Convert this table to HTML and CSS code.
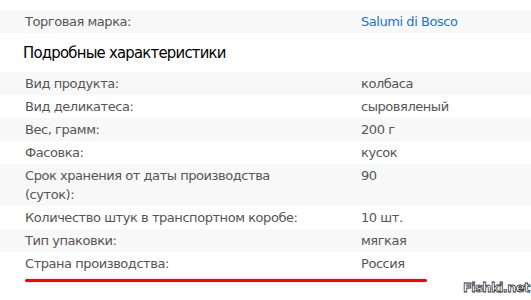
FILE: index.html
```html
<!DOCTYPE html>
<html lang="ru">
<head>
<meta charset="utf-8">
<link rel="stylesheet" href="styles.css">
</head>
<body>
<div class="page">
  <div class="row alt"><div class="label">Торговая марка:</div><div class="value"><a class="link" href="#">Salumi di Bosco</a></div></div>
  <h2 class="heading">Подробные характеристики</h2>
  <div class="row alt"><div class="label">Вид продукта:</div><div class="value">колбаса</div></div>
  <div class="row"><div class="label">Вид деликатеса:</div><div class="value">сыровяленый</div></div>
  <div class="row alt"><div class="label">Вес, грамм:</div><div class="value">200 г</div></div>
  <div class="row"><div class="label">Фасовка:</div><div class="value">кусок</div></div>
  <div class="row alt"><div class="label">Срок хранения от даты производства (суток):</div><div class="value">90</div></div>
  <div class="row"><div class="label">Количество штук в транспортном коробе:</div><div class="value">10 шт.</div></div>
  <div class="row alt"><div class="label">Тип упаковки:</div><div class="value">мягкая</div></div>
  <div class="row last"><div class="label">Страна производства:</div><div class="value">Россия</div></div>
  <div class="underline"></div>
  <div class="watermark">Fishki.net</div>
</div>
</body>
</html>
```
FILE: styles.css
```css
html, body {
  margin: 0;
  padding: 0;
  background: #fff;
}
.page {
  position: relative;
  width: 531px;
  height: 300px;
  overflow: hidden;
  padding-top: 10px;
  box-sizing: border-box;
  font-family: "DejaVu Sans", Tahoma, sans-serif;
  font-size: 13px;
  letter-spacing: -0.45px;
  color: #555;
}
.row {
  display: flex;
  line-height: 19px;
  padding: 2px 0;
}
.row.alt {
  background: #f8f8f8;
}
.label {
  flex: 0 0 361px;
  padding-left: 25px;
  padding-right: 58px;
  box-sizing: border-box;
}
.value {
  flex: 1;
}
.link {
  color: #1a76c9;
  text-decoration: none;
}
.heading {
  margin: 0;
  height: 39px;
  box-sizing: border-box;
  padding: 9px 0 0 23px;
  font-family: "DejaVu Sans Condensed", "DejaVu Sans", sans-serif;
  font-size: 16.5px;
  letter-spacing: -0.75px;
  font-weight: normal;
  line-height: 22px;
  color: #000;
}
.underline {
  position: absolute;
  left: 25px;
  top: 279px;
  width: 402px;
  height: 3px;
  background: #f00;
  border-radius: 2px;
}
.watermark {
  position: absolute;
  left: 463px;
  top: 280px;
  font-family: "DejaVu Sans", sans-serif;
  font-weight: bold;
  font-size: 13px;
  letter-spacing: -0.6px;
  color: #fff;
  -webkit-text-stroke: 0.8px #333;
}
```
